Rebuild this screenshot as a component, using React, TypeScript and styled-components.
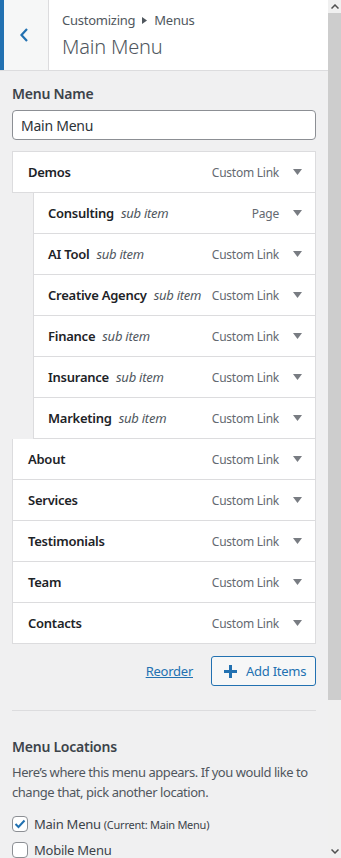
import React from "react";
import styled, { createGlobalStyle } from "styled-components";

const Global = createGlobalStyle`
  html, body { margin: 0; padding: 0; height: 858px; overflow: hidden; }
  body { font-family: "Noto Sans", "Open Sans", sans-serif; background: #f0f0f1; color: #3c434a; letter-spacing: -0.25px; }
  * { box-sizing: border-box; }
`;

const Frame = styled.div`
  display: flex;
  width: 341px;
  height: 858px;
  overflow: hidden;
`;

const Panel = styled.div`
  flex: 1;
  min-width: 0;
  height: 858px;
  overflow: hidden;
  background: #f0f0f1;
`;

const Scrollbar = styled.div`
  width: 13px;
  flex: none;
  display: flex;
  flex-direction: column;
  background: #f0f0f0;
`;

const ScrollArrow = styled.div`
  height: 13px;
  display: flex;
  align-items: center;
  justify-content: center;
`;

const Thumb = styled.div`
  height: 687px;
  background: #cdcdcd;
`;

const Spacer = styled.div`
  flex: 1;
`;

const Header = styled.div`
  display: flex;
  height: 71px;
  background: #fff;
  border-bottom: 1px solid #dcdcde;
`;

const BackButton = styled.div`
  width: 49px;
  flex: none;
  background: #f6f7f7;
  border-left: 4px solid #2271b1;
  border-right: 1px solid #dcdcde;
  display: flex;
  align-items: center;
  justify-content: center;
  padding-right: 4px;
`;

const HeaderText = styled.div`
  padding: 10px 0 0 13px;
  display: flex;
  flex-direction: column;
`;

const Crumbs = styled.div`
  font-size: 13px;
  line-height: 20px;
  color: #50575e;
  display: flex;
  align-items: center;
  gap: 7px;
`;

const Title = styled.div`
  font-size: 20px;
  font-weight: 300;
  line-height: 28px;
  margin-top: 3px;
  color: #50575e;
  letter-spacing: -0.2px;
`;

const Body = styled.div`
  padding: 14px 12px 0 12px;
`;

const Label = styled.div`
  font-size: 14px;
  font-weight: 600;
  line-height: 18px;
  color: #3c434a;
`;

const NameInput = styled.div`
  margin-top: 7px;
  height: 30px;
  border: 1px solid #8c8f94;
  border-radius: 4px;
  background: #fff;
  font-size: 14px;
  color: #2c3338;
  padding: 0 8px;
  display: flex;
  align-items: center;
`;

const List = styled.div`
  margin-top: 11px;
  display: flex;
  flex-direction: column;
`;

const Item = styled.div<{ $sub?: boolean; $first?: boolean }>`
  height: ${(p) => (p.$first ? 42 : 41)}px;
  margin-left: ${(p) => (p.$sub ? 21 : 0)}px;
  background: #fff;
  border: 1px solid #dcdcde;
  border-top: ${(p) => (p.$first ? "1px solid #dcdcde" : "none")};
  display: flex;
  align-items: center;
  padding-left: ${(p) => (p.$sub ? 14 : 15)}px;
  font-size: 13px;
`;

const ItemTitle = styled.span`
  font-weight: 600;
  color: #1d2327;
`;

const SubNote = styled.span`
  font-style: italic;
  color: #50575e;
  margin-left: 7px;
`;

const ItemType = styled.span`
  margin-left: auto;
  color: #646970;
  font-size: 12px;
`;

const Arrow = styled.span`
  width: 36px;
  display: flex;
  justify-content: center;
  color: #787c82;
`;

const Actions = styled.div`
  margin-top: 12px;
  display: flex;
  justify-content: flex-end;
  align-items: center;
  gap: 18px;
`;

const Reorder = styled.a`
  color: #2271b1;
  text-decoration: underline;
  font-size: 13px;
`;

const AddButton = styled.div`
  height: 30px;
  width: 105px;
  border: 1px solid #2271b1;
  border-radius: 3px;
  background: #f6f7f7;
  color: #2271b1;
  font-size: 13px;
  display: flex;
  align-items: center;
  padding-left: 12px;
  gap: 9px;
`;

const Divider = styled.hr`
  margin: 24px 0 0 0;
  border: none;
  border-top: 1px solid #dcdcde;
`;

const SectionTitle = styled(Label)`
  margin-top: 27px;
`;

const Desc = styled.p`
  margin: 6px 0 0 0;
  font-size: 13px;
  line-height: 20px;
  color: #50575e;
  letter-spacing: -0.45px;
`;

const Checks = styled.div`
  margin-top: 9px;
  display: flex;
  flex-direction: column;
`;

const CheckRow = styled.label`
  display: flex;
  align-items: center;
  gap: 6px;
  height: 26px;
  font-size: 13px;
  color: #3c434a;
`;

const Box = styled.span`
  width: 16px;
  height: 16px;
  border: 1px solid #8c8f94;
  border-radius: 4px;
  background: #fff;
  display: flex;
  align-items: center;
  justify-content: center;
`;

const Small = styled.span`
  font-size: 11px;
  margin-left: -3px;
`;

const items: { t: string; type: string; sub?: boolean }[] = [
  { t: "Demos", type: "Custom Link" },
  { t: "Consulting", type: "Page", sub: true },
  { t: "AI Tool", type: "Custom Link", sub: true },
  { t: "Creative Agency", type: "Custom Link", sub: true },
  { t: "Finance", type: "Custom Link", sub: true },
  { t: "Insurance", type: "Custom Link", sub: true },
  { t: "Marketing", type: "Custom Link", sub: true },
  { t: "About", type: "Custom Link" },
  { t: "Services", type: "Custom Link" },
  { t: "Testimonials", type: "Custom Link" },
  { t: "Team", type: "Custom Link" },
  { t: "Contacts", type: "Custom Link" },
];

const Tri = () => (
  <svg width="9" height="6" viewBox="0 0 9 6">
    <path d="M0 0 H9 L4.5 6 Z" fill="#787c82" />
  </svg>
);

export default function App() {
  return (
    <>
      <Global />
      <Frame>
        <Panel>
          <Header>
            <BackButton>
              <svg width="10" height="14" viewBox="0 0 10 14">
                <path d="M8 1 L2.5 7 L8 13" stroke="#2271b1" strokeWidth="2.2" fill="none" />
              </svg>
            </BackButton>
            <HeaderText>
              <Crumbs>
                <span>Customizing</span>
                <svg width="5" height="7" viewBox="0 0 5 7">
                  <path d="M0 0 L5 3.5 L0 7 Z" fill="#50575e" />
                </svg>
                <span>Menus</span>
              </Crumbs>
              <Title>Main Menu</Title>
            </HeaderText>
          </Header>
          <Body>
            <Label>Menu Name</Label>
            <NameInput>Main Menu</NameInput>
            <List>
              {items.map((it, i) => (
                <Item key={it.t} $sub={it.sub} $first={i === 0}>
                  <ItemTitle>{it.t}</ItemTitle>
                  {it.sub && <SubNote>sub item</SubNote>}
                  <ItemType>{it.type}</ItemType>
                  <Arrow>
                    <Tri />
                  </Arrow>
                </Item>
              ))}
            </List>
            <Actions>
              <Reorder href="#">Reorder</Reorder>
              <AddButton>
                <svg width="13" height="13" viewBox="0 0 13 13">
                  <path d="M6.5 0 V13 M0 6.5 H13" stroke="#2271b1" strokeWidth="3" />
                </svg>
                <span>Add Items</span>
              </AddButton>
            </Actions>
            <Divider />
            <SectionTitle>Menu Locations</SectionTitle>
            <Desc>
              Here’s where this menu appears. If you would like to change that, pick another location.
            </Desc>
            <Checks>
              <CheckRow>
                <Box>
                  <svg width="12" height="10" viewBox="0 0 12 10">
                    <path d="M1.5 5 L4.5 8 L10.5 1.5" stroke="#2271b1" strokeWidth="2" fill="none" />
                  </svg>
                </Box>
                <span>Main Menu</span>
                <Small>(Current: Main Menu)</Small>
              </CheckRow>
              <CheckRow>
                <Box />
                <span>Mobile Menu</span>
              </CheckRow>
            </Checks>
          </Body>
        </Panel>
        <Scrollbar>
          <ScrollArrow>
            <svg width="8" height="5" viewBox="0 0 8 5">
              <path d="M0.5 4.5 L4 1 L7.5 4.5" stroke="#505050" strokeWidth="1.5" fill="none" />
            </svg>
          </ScrollArrow>
          <Thumb />
          <Spacer />
          <ScrollArrow>
            <svg width="8" height="5" viewBox="0 0 8 5">
              <path d="M0.5 0.5 L4 4 L7.5 0.5" stroke="#505050" strokeWidth="1.5" fill="none" />
            </svg>
          </ScrollArrow>
        </Scrollbar>
      </Frame>
    </>
  );
}
